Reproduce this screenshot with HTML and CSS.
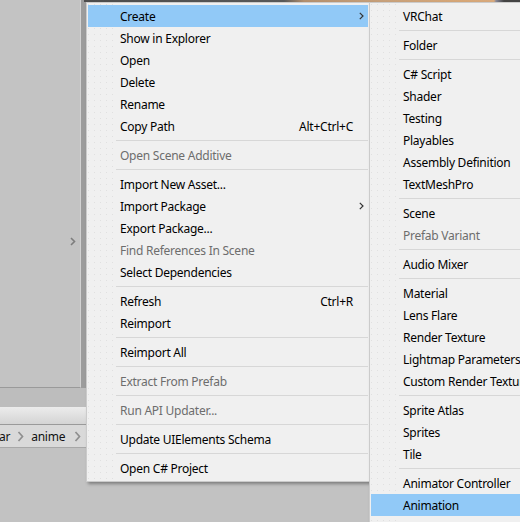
FILE: index.html
```html
<!DOCTYPE html>
<html>
<head>
<meta charset="utf-8">
<link rel="stylesheet" href="styles.css">
</head>
<body>
<div class="app">
  <div class="top">
    <div class="panel">
      <svg class="panel-arrow" width="6" height="9" viewBox="0 0 6 9"><polyline points="1,1 4.5,4.5 1,8" fill="none" stroke="#7d7d7d" stroke-width="1.6"/></svg>
    </div>
    <div class="scene"></div>
  </div>
  <div class="gap"></div>
  <div class="toolbar"></div>
  <div class="crumbs">
    <span class="crumb first">ar</span>
    <svg class="chev" width="7" height="11" viewBox="0 0 7 11"><polyline points="1.5,1 5.5,5.5 1.5,10" fill="none" stroke="#8f8f8f" stroke-width="1.7"/></svg>
    <span class="crumb">anime</span>
    <svg class="chev last" width="7" height="11" viewBox="0 0 7 11"><polyline points="1.5,1 5.5,5.5 1.5,10" fill="none" stroke="#8f8f8f" stroke-width="1.7"/></svg>
  </div>
  <div class="rest"></div>
</div>

<div class="menu menu-main">
  <div class="item hl"><span class="label">Create</span><span class="tail"><svg width="5" height="8" viewBox="0 0 5 8"><polyline points="0.8,0.8 4,4 0.8,7.2" fill="none" stroke="#333" stroke-width="1.2"/></svg></span></div>
  <div class="item"><span class="label">Show in Explorer</span><span class="tail"></span></div>
  <div class="item"><span class="label">Open</span><span class="tail"></span></div>
  <div class="item"><span class="label">Delete</span><span class="tail"></span></div>
  <div class="item"><span class="label">Rename</span><span class="tail"></span></div>
  <div class="item"><span class="label">Copy Path</span><span class="shortcut">Alt+Ctrl+C</span><span class="tail"></span></div>
  <div class="sep"></div>
  <div class="item off"><span class="label">Open Scene Additive</span><span class="tail"></span></div>
  <div class="sep"></div>
  <div class="item"><span class="label">Import New Asset...</span><span class="tail"></span></div>
  <div class="item"><span class="label">Import Package</span><span class="tail"><svg width="5" height="8" viewBox="0 0 5 8"><polyline points="0.8,0.8 4,4 0.8,7.2" fill="none" stroke="#333" stroke-width="1.2"/></svg></span></div>
  <div class="item"><span class="label">Export Package...</span><span class="tail"></span></div>
  <div class="item off"><span class="label">Find References In Scene</span><span class="tail"></span></div>
  <div class="item"><span class="label">Select Dependencies</span><span class="tail"></span></div>
  <div class="sep"></div>
  <div class="item"><span class="label">Refresh</span><span class="shortcut">Ctrl+R</span><span class="tail"></span></div>
  <div class="item"><span class="label">Reimport</span><span class="tail"></span></div>
  <div class="sep"></div>
  <div class="item"><span class="label">Reimport All</span><span class="tail"></span></div>
  <div class="sep"></div>
  <div class="item off"><span class="label">Extract From Prefab</span><span class="tail"></span></div>
  <div class="sep"></div>
  <div class="item off"><span class="label">Run API Updater...</span><span class="tail"></span></div>
  <div class="sep"></div>
  <div class="item"><span class="label">Update UIElements Schema</span><span class="tail"></span></div>
  <div class="sep"></div>
  <div class="item"><span class="label">Open C# Project</span><span class="tail"></span></div>
</div>

<div class="menu menu-sub">
  <div class="item"><span class="label">VRChat</span></div>
  <div class="sep"></div>
  <div class="item"><span class="label">Folder</span></div>
  <div class="sep"></div>
  <div class="item"><span class="label">C# Script</span></div>
  <div class="item"><span class="label">Shader</span></div>
  <div class="item"><span class="label">Testing</span></div>
  <div class="item"><span class="label">Playables</span></div>
  <div class="item"><span class="label">Assembly Definition</span></div>
  <div class="item"><span class="label">TextMeshPro</span></div>
  <div class="sep"></div>
  <div class="item"><span class="label">Scene</span></div>
  <div class="item off"><span class="label">Prefab Variant</span></div>
  <div class="sep"></div>
  <div class="item"><span class="label">Audio Mixer</span></div>
  <div class="sep"></div>
  <div class="item"><span class="label">Material</span></div>
  <div class="item"><span class="label">Lens Flare</span></div>
  <div class="item"><span class="label">Render Texture</span></div>
  <div class="item"><span class="label">Lightmap Parameters</span></div>
  <div class="item"><span class="label">Custom Render Texture</span></div>
  <div class="sep"></div>
  <div class="item"><span class="label">Sprite Atlas</span></div>
  <div class="item"><span class="label">Sprites</span></div>
  <div class="item"><span class="label">Tile</span></div>
  <div class="sep"></div>
  <div class="item"><span class="label">Animator Controller</span></div>
  <div class="item hl"><span class="label">Animation</span></div>
</div>
</body>
</html>
```

FILE: styles.css
```css
html, body {
  margin: 0;
  padding: 0;
}
body {
  width: 520px;
  height: 522px;
  overflow: hidden;
  background: #c2c2c2;
  font-family: "Noto Sans", "Open Sans", sans-serif;
  position: relative;
}
.app {
  display: flex;
  flex-direction: column;
  height: 522px;
}
.top {
  display: flex;
  height: 388px;
}
.panel {
  width: 81px;
  flex: none;
  background: #c3c3c3;
  border-bottom: 1px solid #9a9a9a;
  border-right: 1px solid #d2d2d2;
  display: flex;
  justify-content: flex-end;
  align-items: flex-start;
  padding-top: 237px;
  padding-right: 4px;
  box-sizing: border-box;
}
.scene {
  flex: 1;
  background:
    linear-gradient(to right, #4e4e4e 0, #5a5a5a 200px, #b4906e 220px, #c9a27c 300px, #d8a878 380px, #d9aa7e 410px, #8a8a9a 412px, #454545 420px) 0 0 / 100% 2px no-repeat,
    #9c9c9c;
  border-left: 3px solid #9c9c9c;
}
.gap {
  height: 19px;
  background: #bdbdbd;
}
.toolbar {
  height: 17px;
  background: linear-gradient(#ececec, #d4d4d4);
  border-bottom: 1px solid #9a9a9a;
}
.crumbs {
  height: 22px;
  background: #d9d9d9;
  border-bottom: 1px solid #a8a8a8;
  display: flex;
  align-items: center;
  gap: 7px;
  font-size: 12px;
  letter-spacing: -0.25px;
  color: #111;
}
.crumb.first {
  margin-left: -1px;
}
.chev.last {
  margin-left: 2px;
}
.rest {
  flex: 1;
  background: #c2c2c2;
}

.menu {
  position: absolute;
  top: 2px;
  border: 1px solid #cbcbcb;
  padding: 2px 1px;
  font-size: 12px;
  letter-spacing: -0.25px;
  color: #000;
  background:
    linear-gradient(to right, transparent 29px, #f0f0f0 29px),
    radial-gradient(circle at 1.5px 1.5px, #e0e0e0 0.6px, transparent 1px) 0 0 / 6px 6px,
    #f0f0f0;
  box-shadow: 2px 2px 3px rgba(0, 0, 0, 0.35);
}
.menu-main {
  left: 86px;
  width: 280px;
  z-index: 1;
}
.menu-sub {
  left: 369px;
  width: 200px;
  padding-bottom: 10px;
  z-index: 2;
}
.item {
  height: 22px;
  display: flex;
  align-items: center;
  padding-left: 32px;
  white-space: nowrap;
}
.item.hl {
  background: #91c9f7;
}
.item.off {
  color: #6d6d6d;
}
.label {
  flex: 1;
}
.shortcut {
  margin-right: 1px;
}
.tail {
  width: 14px;
  flex: none;
  display: flex;
  align-items: center;
  justify-content: center;
}
.sep {
  height: 1px;
  background: #d7d7d7;
  margin: 3px 0 3px 28px;
}
```
